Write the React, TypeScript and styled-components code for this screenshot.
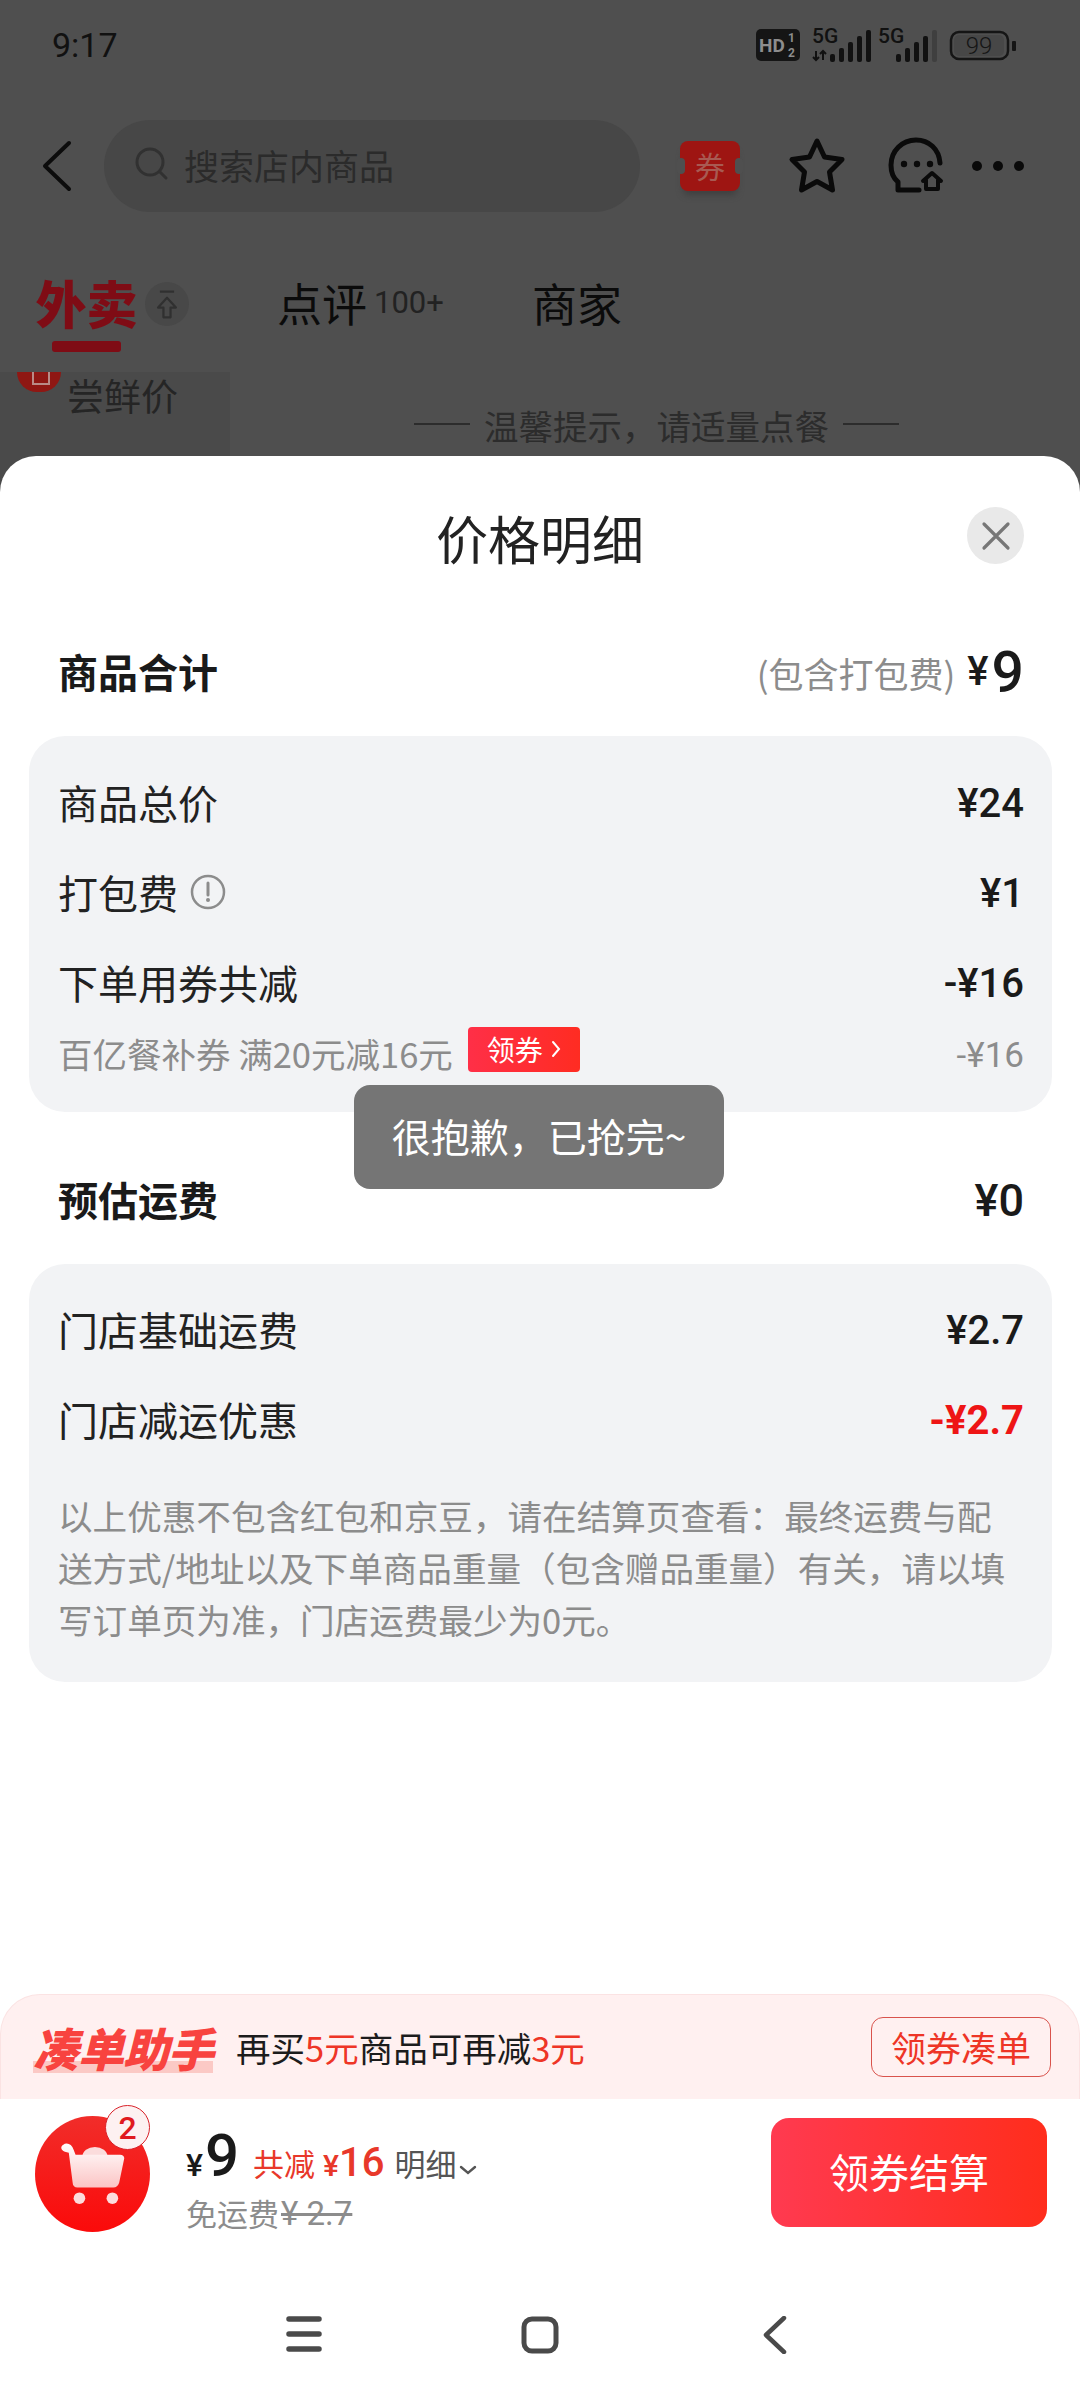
import React from "react";
import styled, { createGlobalStyle } from "styled-components";

const CJK = `"Noto Sans CJK SC", "Noto Sans", sans-serif`;
const NUM = `Roboto, "Noto Sans CJK SC", sans-serif`;

const Global = createGlobalStyle`
  html, body { margin: 0; padding: 0; background: #fff; }
  * { box-sizing: border-box; }
`;

const Screen = styled.div`
  position: relative;
  width: 1080px;
  height: 2400px;
  overflow: hidden;
  display: flex;
  flex-direction: column;
  background: #4f4f4f;
  font-family: ${CJK};
  color: #1a1a1a;
`;

/* dimmed store page behind the sheet */
const Backdrop = styled.div`
  flex: none;
  height: 492px;
  display: flex;
  flex-direction: column;
  color: #0e0e0e;
`;
const StatusBar = styled.div`
  height: 90px;
  display: flex;
  align-items: center;
  justify-content: space-between;
  padding: 0 62px 0 52px;
`;
const Clock = styled.span`
  font: 400 34px/1 Roboto, sans-serif;
  color: #111;
`;
const NavBar = styled.div`
  height: 152px;
  display: flex;
  align-items: center;
  padding-left: 40px;
`;
const SearchBox = styled.div`
  width: 536px;
  height: 92px;
  margin-left: 31px;
  padding: 0 0 4px 30px;
  border-radius: 46px;
  background: #474747;
  display: flex;
  align-items: center;
  gap: 14px;
  font-size: 35px;
  color: #2b2b2b;
`;
const NavIcons = styled.div`
  display: flex;
  align-items: center;
  margin-left: 40px;
`;
const Ticket = styled.div`
  position: relative;
  width: 60px;
  height: 50px;
  margin-right: 48px;
  padding-bottom: 3px;
  border-radius: 8px;
  background: #9e1512;
  box-shadow: 0 7px 6px -3px #404040;
  display: flex;
  align-items: center;
  justify-content: center;
  font-size: 30px;
  color: #a85a52;
  &::before, &::after {
    content: "";
    position: absolute;
    top: 17px;
    width: 8px;
    height: 16px;
    background: #4f4f4f;
    border-radius: 8px;
  }
  &::before { left: -3px; }
  &::after { right: -3px; }
`;
const TabBar = styled.div`
  height: 130px;
  display: flex;
  align-items: flex-start;
  padding: 31px 0 0 36px;
`;
const ActiveTab = styled.div`
  display: flex;
  flex-direction: column;
  align-items: center;
  width: 101px;
  font-size: 51px;
  line-height: 58px;
  font-weight: 900;
  color: #7f0c15;
  white-space: nowrap;
`;
const TabLine = styled.div`
  width: 69px;
  height: 11px;
  margin-top: 10px;
  border-radius: 3px;
  background: #7f0c15;
`;
const UpBadge = styled.div`
  width: 44px;
  height: 44px;
  margin: 9px 0 0 8px;
  border-radius: 50%;
  background: #484848;
  display: flex;
  align-items: center;
  justify-content: center;
`;
const Tab = styled.div<{ $left: number }>`
  margin-left: ${(p) => p.$left}px;
  display: flex;
  align-items: center;
  height: 58px;
  font-size: 45px;
  color: #0b0b0b;
`;
const TabCount = styled.span`
  margin-left: 7px;
  font: 400 31px/1 Roboto, sans-serif;
  color: #222;
`;
const Menu = styled.div`
  flex: 1;
  display: flex;
`;
const MenuSide = styled.div`
  position: relative;
  width: 230px;
  background: #4a4a4a;
  padding: 0 0 0 67px;
  font-size: 37px;
  line-height: 46px;
  color: #252525;
`;
const MenuBadge = styled.div`
  position: absolute;
  left: 17px;
  top: 0;
  width: 44px;
  height: 20px;
  border-radius: 0 0 22px 22px;
  background: #8f1713;
  &::after {
    content: "";
    position: absolute;
    left: 15px;
    top: 0;
    width: 14px;
    height: 11px;
    border: solid #b98a86;
    border-width: 0 2px 2px;
  }
`;
const Tip = styled.div`
  flex: 1;
  height: 78px;
  padding-left: 184px;
  display: flex;
  align-items: flex-end;
  font-size: 34.5px;
  line-height: 50px;
  color: #2c2c2c;
  gap: 14px;
`;
const TipLine = styled.span`
  width: 56px;
  height: 2px;
  margin-bottom: 25px;
  background: #2c2c2c;
`;

/* price detail sheet */
const Sheet = styled.div`
  position: relative;
  flex: 1;
  margin-top: -36px;
  border-radius: 36px 36px 0 0;
  background: #fff;
  display: flex;
  flex-direction: column;
`;
const SheetHead = styled.div`
  position: relative;
  height: 164px;
  padding-bottom: 2px;
  display: flex;
  align-items: center;
  justify-content: center;
  font-size: 52px;
  color: #222;
`;
const CloseBtn = styled.div`
  position: absolute;
  right: 56px;
  top: 51px;
  width: 57px;
  height: 57px;
  border-radius: 50%;
  background: #e9e9e9;
  display: flex;
  align-items: center;
  justify-content: center;
`;
const SectionHead = styled.div<{ $top: number }>`
  height: 64px;
  margin: ${(p) => p.$top}px 0 32px;
  padding: 0 56px 0 58px;
  display: flex;
  align-items: center;
  justify-content: space-between;
`;
const SectionTitle = styled.span`
  font-size: 40px;
  font-weight: 700;
  padding-bottom: 2px;
  color: #1a1a1a;
`;
const SectionAmount = styled.span`
  display: flex;
  align-items: center;
`;
const Hint = styled.span`
  font-size: 35px;
  color: #8c8c8c;
  margin-right: 12px;
`;
const Yen = styled.span<{ $size: number }>`
  font: 500 ${(p) => p.$size}px/1 ${NUM};
  color: #1a1a1a;
  margin-right: 3px;
`;
const BigNum = styled.span`
  font: 500 57px/1 ${NUM};
  color: #1a1a1a;
`;
const Total = styled.span`
  font: 500 45px/1 ${NUM};
  color: #1a1a1a;
`;
const Card = styled.div<{ $pad: string }>`
  margin: 0 28px 0 29px;
  padding: ${(p) => p.$pad};
  border-radius: 36px;
  background: #f2f3f5;
`;
const Row = styled.div`
  height: 90px;
  display: flex;
  align-items: center;
  justify-content: space-between;
`;
const Label = styled.span`
  display: flex;
  align-items: center;
  gap: 12px;
  padding-bottom: 3px;
  font-size: 40px;
  color: #222;
`;
const Amount = styled.span<{ $red?: boolean }>`
  padding-top: 2px;
  font: ${(p) => (p.$red ? 700 : 500)} 40px/1 ${NUM};
  color: ${(p) => (p.$red ? "#ee1515" : "#1a1a1a")};
`;
const SubRow = styled.div`
  height: 54px;
  display: flex;
  align-items: center;
  justify-content: space-between;
`;
const SubLabel = styled.span`
  display: flex;
  align-items: center;
  padding-bottom: 4px;
  font-size: 34.5px;
  color: #8c8c8c;
`;
const SubAmount = styled.span`
  font: 400 35px/1 ${NUM};
  color: #8c8c8c;
`;
const CouponTag = styled.span`
  margin: -8px 0 0 15px;
  width: 112px;
  height: 45px;
  border-radius: 4px;
  background: linear-gradient(90deg, #ff2f47, #ff2c22);
  display: flex;
  align-items: center;
  justify-content: center;
  gap: 8px;
  font-size: 28px;
  color: #fff;
`;
const Note = styled.div`
  margin-top: 24px;
  padding-bottom: 3px;
  font-size: 34.6px;
  line-height: 52px;
  color: #8c8c8c;
  white-space: nowrap;
`;
const Toast = styled.div`
  position: absolute;
  left: 354px;
  top: 1085px;
  width: 370px;
  height: 104px;
  padding-bottom: 4px;
  border-radius: 16px;
  background: #757575;
  display: flex;
  align-items: center;
  justify-content: center;
  font-size: 39px;
  color: #fff;
`;
const Spacer = styled.div`
  flex: 1;
`;

/* add-on helper strip */
const Helper = styled.div`
  flex: none;
  height: 105px;
  padding: 0 28px 0 32px;
  border: 1px solid #fbe3e3;
  border-bottom: 0;
  border-radius: 40px 40px 0 0;
  background: #fff0f0;
  display: flex;
  align-items: center;
`;
const HelperBrand = styled.span`
  font-size: 46px;
  line-height: 52px;
  font-weight: 900;
  font-style: italic;
  letter-spacing: -1px;
  color: #f8433f;
  background: linear-gradient(180deg, transparent 76%, #fbc9c5 76%);
`;
const HelperText = styled.span`
  margin-left: 23px;
  font-size: 34.5px;
  color: #1c1c1c;
  white-space: nowrap;
`;
const HelperRed = styled.span`
  color: #ee3526;
`;
const HelperBtn = styled.div`
  margin-left: auto;
  width: 180px;
  height: 60px;
  padding-bottom: 2px;
  border: 1px solid #d9534c;
  border-radius: 12px;
  display: flex;
  align-items: center;
  justify-content: center;
  font-size: 35px;
  color: #ee3526;
`;

/* checkout bar */
const CheckoutBar = styled.div`
  flex: none;
  height: 180px;
  padding: 0 33px 48px 35px;
  display: flex;
  align-items: center;
`;
const CartBall = styled.div`
  position: relative;
  flex: none;
  width: 115px;
  height: 116px;
  margin-top: 18px;
  border-radius: 50%;
  background: linear-gradient(180deg, #f12d2a, #fb0a0a);
  display: flex;
  align-items: center;
  justify-content: center;
`;
const CartCount = styled.span`
  position: absolute;
  right: 0;
  top: -11px;
  width: 45px;
  height: 45px;
  border: 1px solid #d9222a;
  border-radius: 50%;
  background: #fdf1f1;
  display: flex;
  align-items: center;
  justify-content: center;
  font: 500 32px/1 Roboto, sans-serif;
  color: #e01a1f;
`;
const PriceBlock = styled.div`
  margin: 28px 0 0 36px;
  display: flex;
  flex-direction: column;
  gap: 6px;
`;
const PriceLine = styled.div`
  display: flex;
  align-items: baseline;
  height: 62px;
`;
const PriceYen = styled.span`
  font: 500 32px/1 ${NUM};
  color: #1a1a1a;
  margin-right: 2px;
`;
const PriceNum = styled.span`
  font: 500 60px/62px ${NUM};
  color: #1a1a1a;
`;
const Saved = styled.span`
  margin-left: 14px;
  font-size: 31px;
  color: #e8382a;
`;
const SavedYen = styled.span`
  margin-left: 8px;
  font: 500 30px/1 ${NUM};
  color: #e8382a;
`;
const SavedNum = styled.span`
  font: 500 40px/1 ${NUM};
  color: #e8382a;
`;
const Detail = styled.span`
  margin-left: 10px;
  font-size: 31px;
  color: #555;
`;
const FreeLine = styled.div`
  display: flex;
  align-items: center;
  font-size: 31px;
  line-height: 40px;
  color: #8c8c8c;
`;
const Struck = styled.span`
  margin-left: 2px;
  font: 400 33px/1 ${NUM};
  text-decoration: line-through;
`;
const PayBtn = styled.div`
  margin: 15px 0 0 auto;
  width: 276px;
  height: 109px;
  padding-bottom: 4px;
  border-radius: 18px;
  background: linear-gradient(90deg, #ff3a50, #ff2d1c);
  display: flex;
  align-items: center;
  justify-content: center;
  font-size: 40px;
  color: #fff;
`;
const SystemNav = styled.div`
  flex: none;
  height: 121px;
  display: flex;
  align-items: flex-start;
  padding: 37px 0 0 286px;
  gap: 199px;
`;

const Signal = ({ lit, data }: { lit: number; data?: boolean }) => (
  <>
    <text x="0" y="15" fontFamily="Roboto, sans-serif" fontSize="21" fontWeight="500" fill="#111">5G</text>
    {data && (
      <path d="M4 23v9M1 29l3 3 3-3M11 32v-9M8 26l3-3 3 3" stroke="#111" strokeWidth="2" fill="none" />
    )}
    {[18, 27, 36, 45, 54].map((x, i) => (
      <rect key={x} x={x} y={26 - i * 6} width="5" height={8 + i * 6} rx="2" fill={i < lit ? "#111" : "#3f3f3f"} />
    ))}
  </>
);

const StatusIcons = () => (
  <svg width="262" height="40" viewBox="0 0 262 40">
    <g transform="translate(0 3)">
      <rect x="0" y="1" width="44" height="32" rx="5" fill="#151515" />
      <text x="3" y="24" fontFamily="Roboto, sans-serif" fontSize="19" fontWeight="700" fill="#8d8d8d">HD</text>
      <text x="32" y="14" fontFamily="Roboto, sans-serif" fontSize="12" fontWeight="700" fill="#8d8d8d">1</text>
      <text x="32" y="29" fontFamily="Roboto, sans-serif" fontSize="12" fontWeight="700" fill="#8d8d8d">2</text>
      <g transform="translate(56 0)"><Signal lit={5} data /></g>
      <g transform="translate(122 0)"><Signal lit={4} /></g>
      <rect x="195" y="4" width="57" height="27" rx="8" fill="none" stroke="#151515" strokeWidth="2.5" />
      <rect x="198" y="7" width="50" height="21" rx="5" fill="#474747" />
      <text x="223" y="26" textAnchor="middle" fontFamily="Roboto, sans-serif" fontSize="24" fontWeight="300" fill="#151515">99</text>
      <rect x="256" y="13" width="4" height="10" rx="1" fill="#151515" />
    </g>
  </svg>
);

export default function App() {
  return (
    <Screen>
      <Global />
      <Backdrop>
        <StatusBar>
          <Clock>9:17</Clock>
          <StatusIcons />
        </StatusBar>
        <NavBar>
          <svg width="33" height="52" viewBox="0 0 33 52">
            <path d="M29 3 5 26l24 23" fill="none" stroke="#0c0c0c" strokeWidth="4" strokeLinecap="round" strokeLinejoin="round" />
          </svg>
          <SearchBox>
            <svg width="36" height="36" viewBox="0 0 36 36">
              <circle cx="16" cy="16" r="13" fill="none" stroke="#313131" strokeWidth="3" />
              <path d="m26 26 6 6" stroke="#313131" strokeWidth="3" strokeLinecap="round" />
            </svg>
            搜索店内商品
          </SearchBox>
          <NavIcons>
            <Ticket>券</Ticket>
            <svg width="58" height="58" viewBox="0 0 58 58">
              <path d="M29 4 36.5 20 54 22.5 41.5 35 44.5 53 29 44.5 13.5 53 16.5 35 4 22.5 21.5 20Z" fill="none" stroke="#0a0a0a" strokeWidth="5" strokeLinejoin="round" />
            </svg>
            <svg width="60" height="58" viewBox="0 0 60 58" style={{ marginLeft: 41 }}>
              <path d="M53 26C52 12 42 3 29 3 15 3 4 14 4 28c0 7 2 13 7 17v8h21" fill="none" stroke="#0a0a0a" strokeWidth="5" strokeLinecap="round" strokeLinejoin="round" />
              <circle cx="17" cy="27" r="3.2" fill="#0a0a0a" />
              <circle cx="30" cy="27" r="3.2" fill="#0a0a0a" />
              <circle cx="43" cy="27" r="3.2" fill="#0a0a0a" />
              <path d="M36 44 45 36 54 44M39 43v9h12v-9" fill="none" stroke="#0a0a0a" strokeWidth="4" strokeLinecap="round" strokeLinejoin="round" />
            </svg>
            <svg width="56" height="12" viewBox="0 0 56 12" style={{ marginLeft: 24 }}>
              <circle cx="6" cy="6" r="5" fill="#0a0a0a" />
              <circle cx="27" cy="6" r="5" fill="#0a0a0a" />
              <circle cx="48" cy="6" r="5" fill="#0a0a0a" />
            </svg>
          </NavIcons>
        </NavBar>
        <TabBar>
          <ActiveTab>
            外卖
            <TabLine />
          </ActiveTab>
          <UpBadge>
            <svg width="26" height="32" viewBox="0 0 26 36">
              <path d="M5 4h16M13 11 3 22h6v11h8V22h6Z" fill="none" stroke="#303030" strokeWidth="2.5" strokeLinejoin="round" />
            </svg>
          </UpBadge>
          <Tab $left={88}>
            点评
            <TabCount>100+</TabCount>
          </Tab>
          <Tab $left={88}>商家</Tab>
        </TabBar>
        <Menu>
          <MenuSide>
            <MenuBadge />
            尝鲜价
          </MenuSide>
          <Tip>
            <TipLine />
            温馨提示，请适量点餐
            <TipLine />
          </Tip>
        </Menu>
      </Backdrop>

      <Sheet>
        <SheetHead>
          价格明细
          <CloseBtn>
            <svg width="30" height="30" viewBox="0 0 30 30">
              <path d="m3 3 24 24M27 3 3 27" stroke="#777" strokeWidth="3.2" strokeLinecap="round" />
            </svg>
          </CloseBtn>
        </SheetHead>

        <SectionHead $top={20}>
          <SectionTitle>商品合计</SectionTitle>
          <SectionAmount>
            <Hint>(包含打包费)</Hint>
            <Yen $size={40}>¥</Yen>
            <BigNum>9</BigNum>
          </SectionAmount>
        </SectionHead>
        <Card $pad="22px 28px 30px 29px">
          <Row>
            <Label>商品总价</Label>
            <Amount>¥24</Amount>
          </Row>
          <Row>
            <Label>
              打包费
              <svg width="36" height="36" viewBox="0 0 36 36">
                <circle cx="18" cy="18" r="16" fill="none" stroke="#8c8c8c" strokeWidth="2.5" />
                <path d="M18 9v12" stroke="#8c8c8c" strokeWidth="3" strokeLinecap="round" />
                <circle cx="18" cy="26" r="2" fill="#8c8c8c" />
              </svg>
            </Label>
            <Amount>¥1</Amount>
          </Row>
          <Row>
            <Label>下单用券共减</Label>
            <Amount>-¥16</Amount>
          </Row>
          <SubRow>
            <SubLabel>
              百亿餐补券 满20元减16元
              <CouponTag>
                领券
                <svg width="10" height="18" viewBox="0 0 10 18">
                  <path d="m2 2 6 7-6 7" fill="none" stroke="#fff" strokeWidth="2" strokeLinecap="round" />
                </svg>
              </CouponTag>
            </SubLabel>
            <SubAmount>-¥16</SubAmount>
          </SubRow>
        </Card>

        <SectionHead $top={56}>
          <SectionTitle>预估运费</SectionTitle>
          <Total>¥0</Total>
        </SectionHead>
        <Card $pad="21px 28px 34px 29px">
          <Row>
            <Label>门店基础运费</Label>
            <Amount>¥2.7</Amount>
          </Row>
          <Row>
            <Label>门店减运优惠</Label>
            <Amount $red>-¥2.7</Amount>
          </Row>
          <Note>
            以上优惠不包含红包和京豆，请在结算页查看：最终运费与配
            <br />
            送方式/地址以及下单商品重量（包含赠品重量）有关，请以填
            <br />
            写订单页为准，门店运费最少为0元。
          </Note>
        </Card>

        <Spacer />

        <Helper>
          <HelperBrand>凑单助手</HelperBrand>
          <HelperText>
            再买<HelperRed>5元</HelperRed>商品可再减<HelperRed>3元</HelperRed>
          </HelperText>
          <HelperBtn>领券凑单</HelperBtn>
        </Helper>

        <CheckoutBar>
          <CartBall>
            <svg width="66" height="62" viewBox="0 0 68 64">
              <defs>
                <linearGradient id="basket" x1="0" y1="0" x2="0" y2="1">
                  <stop offset="0" stopColor="#fff" />
                  <stop offset="1" stopColor="#fcc4c4" />
                </linearGradient>
              </defs>
              <path d="M23 14a13 10 0 0 1 26 0Z" fill="#fbdcdc" />
              <path d="M3 2c4-3 9-1 11 5l2 5h46c3 0 5 2 4 5l-5 24c-1 3-3 5-6 5H18c-3 0-5-2-5-5L9 10 5 9C1 8 0 4 3 2Z" fill="url(#basket)" />
              <circle cx="20" cy="57" r="6" fill="#fcdcdc" />
              <circle cx="54" cy="57" r="6" fill="#fcdcdc" />
            </svg>
            <CartCount>2</CartCount>
          </CartBall>
          <PriceBlock>
            <PriceLine>
              <PriceYen>¥</PriceYen>
              <PriceNum>9</PriceNum>
              <Saved>共减</Saved>
              <SavedYen>¥</SavedYen>
              <SavedNum>16</SavedNum>
              <Detail>明细</Detail>
              <svg width="18" height="12" viewBox="0 0 18 12" style={{ marginLeft: 2 }}>
                <path d="m2 3 7 6 7-6" fill="none" stroke="#555" strokeWidth="2.4" strokeLinecap="round" />
              </svg>
            </PriceLine>
            <FreeLine>
              免运费<Struck>¥ 2.7</Struck>
            </FreeLine>
          </PriceBlock>
          <PayBtn>领券结算</PayBtn>
        </CheckoutBar>

        <SystemNav>
          <svg width="36" height="36" viewBox="0 0 36 36">
            <path d="M3 3h30M3 18h30M3 33h30" stroke="#4a4a4a" strokeWidth="5.5" strokeLinecap="round" />
          </svg>
          <svg width="38" height="38" viewBox="0 0 38 38">
            <rect x="3" y="3" width="32" height="32" rx="8" fill="none" stroke="#4a4a4a" strokeWidth="5" />
          </svg>
          <svg width="24" height="38" viewBox="0 0 24 38" style={{ marginLeft: 5 }}>
            <path d="M21 2 3 19l18 17" fill="none" stroke="#4a4a4a" strokeWidth="4.5" strokeLinecap="round" strokeLinejoin="round" />
          </svg>
        </SystemNav>
      </Sheet>

      <Toast>很抱歉，已抢完~</Toast>
    </Screen>
  );
}
